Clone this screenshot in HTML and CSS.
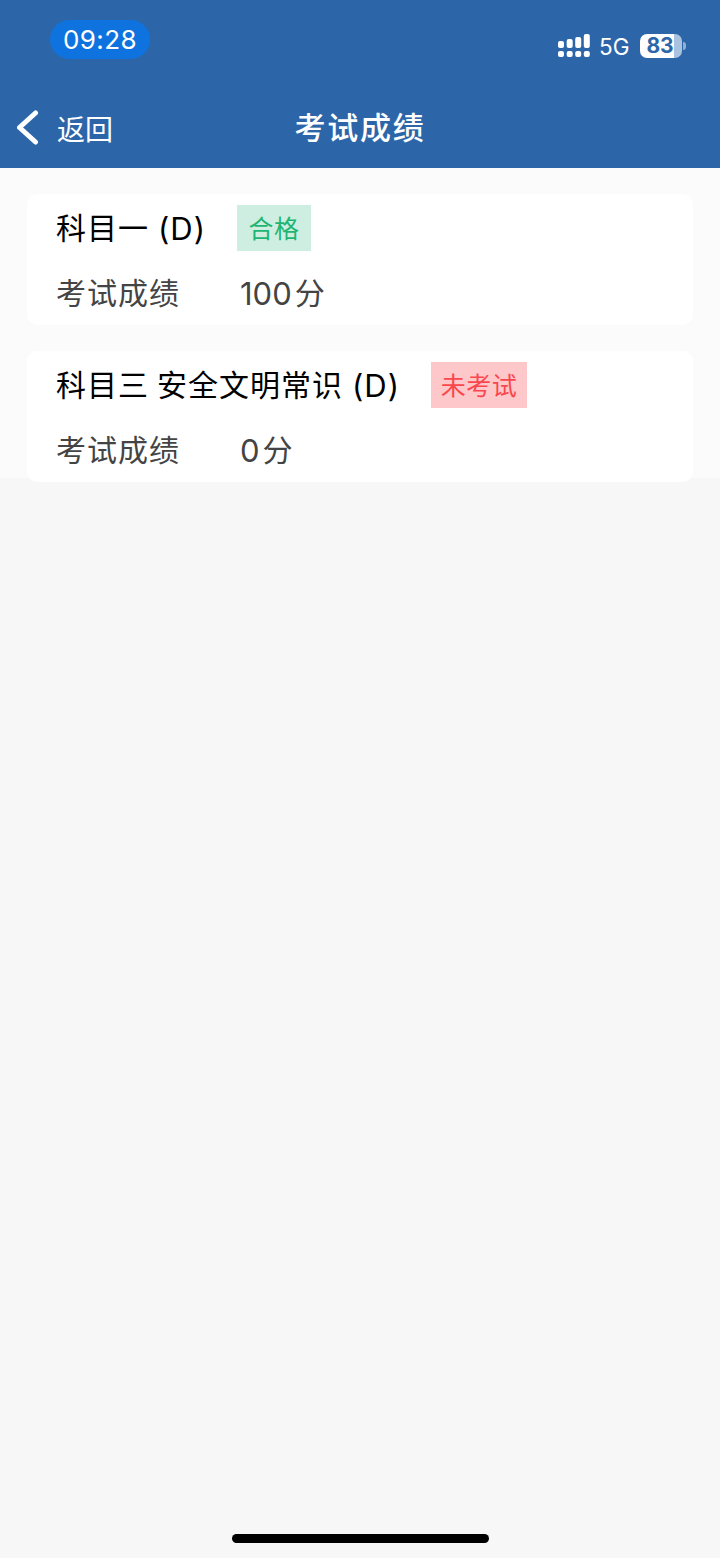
FILE: index.html
```html
<!DOCTYPE html>
<html lang="zh-CN">
<head>
    <meta charset="UTF-8">
    <meta name="viewport" content="width=device-width, initial-scale=1.0">
    <title>考试成绩</title>
    <link rel="stylesheet" href="styles.css">
</head>
<body>
    <header class="header">
        <div class="status-bar">
            <span class="time">09:28</span>
            <div class="status-right">
                <svg class="signal" width="32" height="24" viewBox="0 0 32 24" fill="#fff">
                    <rect x="0" y="7" width="6" height="7" rx="2"/>
                    <rect x="8.7" y="5" width="6" height="9" rx="2"/>
                    <rect x="17.2" y="3" width="6" height="11" rx="2"/>
                    <rect x="25.8" y="0" width="6" height="14" rx="2"/>
                    <rect x="0" y="17" width="6" height="6" rx="2"/>
                    <rect x="8.7" y="17" width="6" height="6" rx="2"/>
                    <rect x="17.2" y="17" width="6" height="6" rx="2"/>
                    <rect x="25.8" y="17" width="6" height="6" rx="2"/>
                </svg>
                <span class="network">5G</span>
                <span class="battery">83</span>
                <span class="battery-cap"></span>
            </div>
        </div>
        <nav class="nav">
            <a class="back">
                <svg width="22" height="36" viewBox="0 0 22 36" fill="none" stroke="#fff" stroke-width="5" stroke-linecap="round" stroke-linejoin="round">
                    <path d="M18.5 3 L2.5 17.5 L18.5 32"/>
                </svg>
                <span>返回</span>
            </a>
            <h1>考试成绩</h1>
        </nav>
    </header>

    <main class="list">
        <section class="card">
            <div class="card-title">
                <span>科目一</span>
                <span class="type">(D)</span>
                <span class="tag pass">合格</span>
            </div>
            <div class="card-score">
                <span class="label">考试成绩</span>
                <span class="num">100</span>
                <span>分</span>
            </div>
        </section>
        <section class="card">
            <div class="card-title">
                <span>科目三</span>
                <span class="name">安全文明常识</span>
                <span class="type">(D)</span>
                <span class="tag none">未考试</span>
            </div>
            <div class="card-score">
                <span class="label">考试成绩</span>
                <span class="num">0</span>
                <span>分</span>
            </div>
        </section>
    </main>

    <div class="home-bar"></div>
</body>
</html>
```

FILE: styles.css
```css
* {
    box-sizing: border-box;
}
body {
    margin: 0;
    height: 1558px;
    display: flex;
    flex-direction: column;
    background: #f7f7f7;
    font-family: Inter, "Noto Sans CJK SC", sans-serif;
    color: #000;
    overflow: hidden;
}
.header {
    height: 168px;
    background: #2c66a9;
    color: #fff;
}
.status-bar {
    height: 88px;
    padding: 20px 34px 0 50px;
    display: flex;
    justify-content: space-between;
    align-items: flex-start;
}
.time {
    width: 100px;
    height: 39px;
    line-height: 39px;
    border-radius: 20px;
    background: #0f73df;
    text-align: center;
    font-size: 26px;
    font-weight: 400;
    letter-spacing: 0.4px;
}
.status-right {
    display: flex;
    align-items: center;
    height: 24px;
    margin-top: 14px;
}
.network {
    margin-left: 9px;
    width: 32px;
    font-size: 22.5px;
    line-height: 24px;
    padding-top: 1px;
}
.battery {
    margin-left: 9px;
    width: 42px;
    height: 24px;
    line-height: 24px;
    padding-right: 2px;
    border-radius: 7px;
    background: linear-gradient(to right, #fff 34px, #a9c2df 34px);
    color: #2c66a9;
    text-align: center;
    font-size: 21px;
    font-weight: 700;
}
.battery-cap {
    margin-left: 1px;
    width: 3px;
    height: 8px;
    border-radius: 0 4px 4px 0;
    background: #8fb0d5;
}
.nav {
    height: 80px;
    display: grid;
    grid-template-columns: 1fr auto 1fr;
    align-items: center;
}
.back {
    display: flex;
    align-items: center;
    gap: 18px;
    padding: 0 0 1px 17px;
    font-size: 28px;
}
.nav h1 {
    margin: 0;
    padding-bottom: 5px;
    font-size: 31px;
    font-weight: 500;
    letter-spacing: 1.8px;
}
.list {
    height: 310px;
    padding: 26px 27px 0;
    background: #fbfbfb;
}
.card {
    height: 131px;
    margin-bottom: 26px;
    padding: 11px 29px 0;
    border-radius: 10px;
    background: #fff;
}
.card-title, .card-score {
    display: flex;
    align-items: center;
    height: 46px;
    font-size: 30px;
    letter-spacing: 1px;
}
.card-title span:not(.type, .tag), .card-score span:not(.num) {
    padding-bottom: 4px;
}
.name {
    margin-left: 8px;
}
.type {
    width: 48px;
    margin-left: 9px;
    font-size: 31px;
}
.tag {
    height: 46px;
    line-height: 48px;
    margin-left: 31px;
    text-align: center;
    font-size: 25px;
    letter-spacing: 0.5px;
}
.pass {
    width: 74px;
    background: #cdeee0;
    color: #1fb573;
}
.none {
    width: 96px;
    background: #fec7c9;
    color: #f9474d;
}
.card-score {
    margin-top: 19px;
    color: #444;
}
.label {
    width: 184px;
}
.num {
    margin-right: 3px;
    font-size: 31px;
    letter-spacing: 0;
}
.home-bar {
    width: 257px;
    height: 9px;
    margin: auto auto 15px;
    border-radius: 5px;
    background: #000;
}
```
